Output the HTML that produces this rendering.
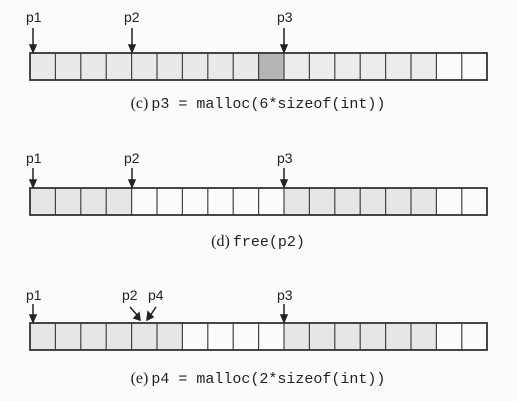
<!DOCTYPE html>
<html><head><style>
html,body{margin:0;padding:0;background:#fbfbfb;}
svg{display:block}
.l{font-family:"Liberation Sans",sans-serif;font-size:14px;fill:#222}
.c{font-family:"Liberation Serif",serif;font-size:16px;fill:#222}
.m{font-family:"Liberation Mono",monospace;font-size:15px;fill:#222}
</style></head><body>
<svg width="517" height="401" viewBox="0 0 517 401" xmlns="http://www.w3.org/2000/svg">
<defs>
<g id="grid">
<path d="M55.4 0V27M80.8 0V27M106.2 0V27M131.6 0V27M157 0V27M182.4 0V27M207.8 0V27M233.2 0V27M258.6 0V27M284 0V27M309.4 0V27M334.8 0V27M360.2 0V27M385.6 0V27M411 0V27M436.4 0V27M461.8 0V27" stroke="#444" stroke-width="1.2"/>
<rect x="30" y="0" width="457" height="27" fill="none" stroke="#333" stroke-width="1.8"/>
</g>
<marker id="ah" markerWidth="8" markerHeight="8" refX="4" refY="7" orient="auto-start-reverse" markerUnits="userSpaceOnUse"><path d="M0 0L4 8L8 0L4 3Z" fill="#222"/></marker>
</defs>
<style>.a{stroke:#222;stroke-width:1.5;fill:#222}</style>

<!-- row c -->
<g transform="translate(0,53)">
<rect x="30" y="0" width="254" height="27" fill="#e9e9e9"/>
<rect x="258.6" y="0" width="25.4" height="27" fill="#b5b5b5"/>
<rect x="284" y="0" width="152.4" height="27" fill="#ececec"/>
<use href="#grid"/>
</g>
<text class="l" x="26" y="22">p1</text>
<text class="l" x="124" y="22">p2</text>
<text class="l" x="277" y="22">p3</text>
<path d="M33 28V46M30 45L33 52L36 45Z" class="a"/>
<path d="M132 28V46M129 45L132 52L135 45Z" class="a"/>
<path d="M284 28V46M281 45L284 52L287 45Z" class="a"/>
<text x="258" y="108" text-anchor="middle"><tspan class="c">(c)</tspan><tspan class="m" dx="3">p3 = malloc(6*sizeof(int))</tspan></text>

<!-- row d -->
<g transform="translate(0,188)">
<rect x="30" y="0" width="101.6" height="27" fill="#e6e6e6"/>
<rect x="284" y="0" width="152.4" height="27" fill="#e6e6e6"/>
<use href="#grid"/>
</g>
<text class="l" x="26" y="163">p1</text>
<text class="l" x="124" y="163">p2</text>
<text class="l" x="277" y="163">p3</text>
<path d="M33 168V181M30 180L33 187L36 180Z" class="a"/>
<path d="M132 168V181M129 180L132 187L135 180Z" class="a"/>
<path d="M284 168V181M281 180L284 187L287 180Z" class="a"/>
<text x="258" y="246" text-anchor="middle"><tspan class="c">(d)</tspan><tspan class="m" dx="3">free(p2)</tspan></text>

<!-- row e -->
<g transform="translate(0,323)">
<rect x="30" y="0" width="152.4" height="27" fill="#e6e6e6"/>
<rect x="284" y="0" width="152.4" height="27" fill="#e6e6e6"/>
<use href="#grid"/>
</g>
<text class="l" x="26" y="300">p1</text>
<text class="l" x="122" y="300">p2</text>
<text class="l" x="148" y="300">p4</text>
<text class="l" x="277" y="300">p3</text>
<path d="M33 304V316M30 315L33 322L36 315Z" class="a"/>
<path d="M284 304V316M281 315L284 322L287 315Z" class="a"/>
<path d="M130 307L138 316M134 318L140 320L139 313Z" class="a"/>
<path d="M156 307L150 316M148 312L147 320L153 317Z" class="a"/>
<text x="258" y="383" text-anchor="middle"><tspan class="c">(e)</tspan><tspan class="m" dx="3">p4 = malloc(2*sizeof(int))</tspan></text>
</svg>
</body></html>
